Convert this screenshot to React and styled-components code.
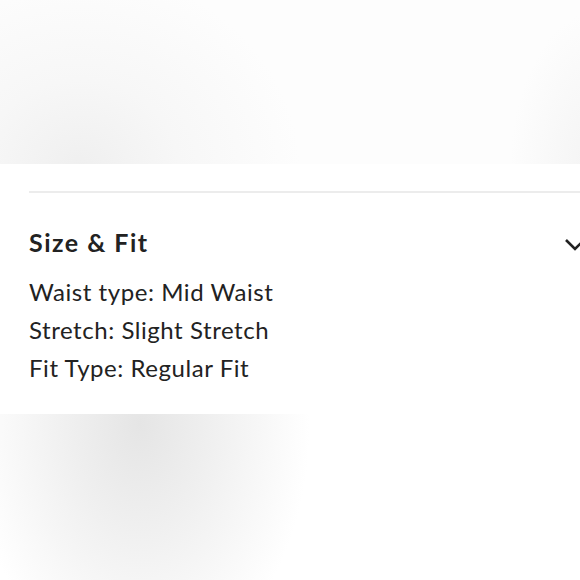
import React from "react";
import styled, { createGlobalStyle } from "styled-components";

const GlobalStyle = createGlobalStyle`
  html, body {
    margin: 0;
    padding: 0;
    background: #ffffff;
    overflow: hidden;
  }
  body {
    font-family: Lato, "Open Sans", sans-serif;
    color: #222222;
  }
`;

const Page = styled.div`
  width: 580px;
  height: 580px;
  display: flex;
  flex-direction: column;
  overflow: hidden;
`;

const TopBand = styled.div`
  height: 164px;
  flex-shrink: 0;
  background:
    radial-gradient(ellipse 220px 200px at 80px 170px, #efefef 0%, #f7f7f7 45%, rgba(255,255,255,0) 100%),
    radial-gradient(ellipse 90px 160px at 600px 170px, #f3f3f3 0%, rgba(255,255,255,0) 100%),
    #fdfdfd;
`;

const Panel = styled.section`
  width: 620px;
  padding: 27px 0 0 29px;
  height: 250px;
  box-sizing: border-box;
  background: #ffffff;
  flex-shrink: 0;
`;

const Divider = styled.hr`
  margin: 0;
  border: none;
  height: 2px;
  background: #ececec;
`;

const Header = styled.div`
  display: flex;
  align-items: center;
  justify-content: space-between;
  padding-right: 34px;
  margin-top: 33px;
`;

const Title = styled.h2`
  margin: 0;
  font-size: 25px;
  font-weight: 700;
  line-height: 32px;
  color: #222222;
  letter-spacing: 1.5px;
`;

const Chevron = styled.svg`
  width: 22px;
  height: 14px;
  margin-top: 6px;
`;

const Specs = styled.div`
  margin-top: 15px;
  display: flex;
  flex-direction: column;
`;

const Spec = styled.div`
  font-size: 24px;
  line-height: 38px;
  color: #222222;
  letter-spacing: 0.55px;
`;

const BottomBand = styled.div`
  flex: 1;
  background:
    radial-gradient(ellipse 170px 250px at 140px 10px, #e5e5e5 0%, #efefef 40%, rgba(255,255,255,0) 100%),
    #ffffff;
`;

const specs = [
  "Waist type: Mid Waist",
  "Stretch: Slight Stretch",
  "Fit Type: Regular Fit",
];

export default function App() {
  return (
    <>
      <GlobalStyle />
      <Page>
        <TopBand />
        <Panel>
          <Divider />
          <Header>
            <Title>Size &amp; Fit</Title>
            <Chevron viewBox="0 0 22 14">
              <polyline
                points="2,2 11,11 20,2"
                fill="none"
                stroke="#222"
                strokeWidth="2.6"
              />
            </Chevron>
          </Header>
          <Specs>
            {specs.map((s) => (
              <Spec key={s}>{s}</Spec>
            ))}
          </Specs>
        </Panel>
        <BottomBand />
      </Page>
    </>
  );
}
